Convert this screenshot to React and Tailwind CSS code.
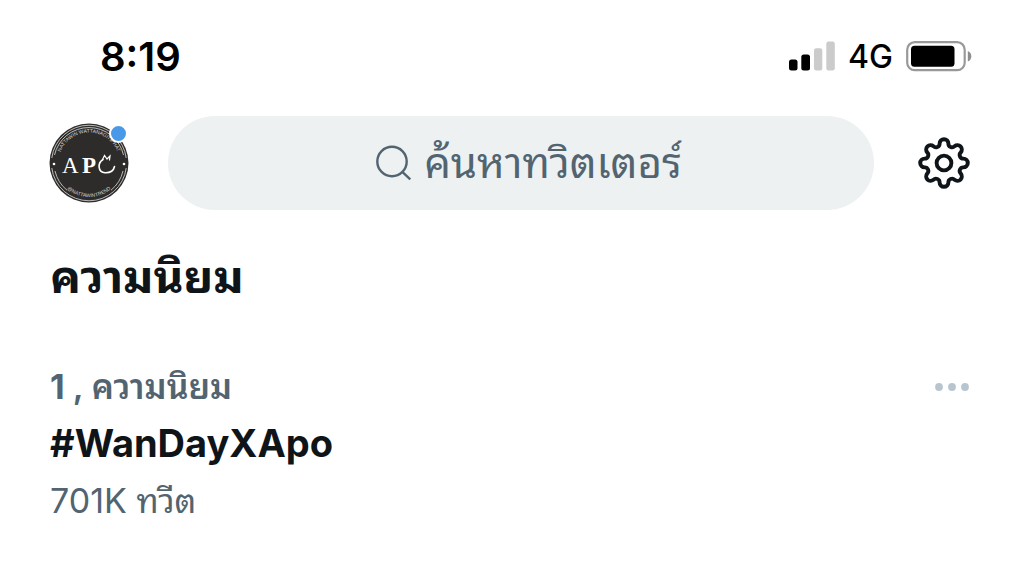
import React from 'react';

function SignalIcon() {
  return (
    <svg viewBox="0 0 46 32" className="h-8 w-[46px]" aria-hidden="true">
      <rect x="0" y="18.5" width="8.5" height="11" rx="2.5" fill="#000" />
      <rect x="12.3" y="13.5" width="8.7" height="16" rx="2.5" fill="#000" />
      <rect x="25" y="7.2" width="8.3" height="22.3" rx="2.2" fill="#cbcbcb" />
      <rect x="37.3" y="0.5" width="8.5" height="29" rx="2.2" fill="#cbcbcb" />
    </svg>
  );
}

function BatteryIcon() {
  return (
    <svg viewBox="0 0 66 32" className="h-8 w-[66px]" aria-hidden="true">
      <rect x="1.2" y="1.2" width="57.5" height="28" rx="7.5" fill="none" stroke="#999" strokeWidth="2.2" />
      <rect x="5" y="4.8" width="43.5" height="20.9" rx="3.5" fill="#000" />
      <path d="M61.8 10 Q65.3 11.5 65.3 15.2 Q65.3 19 61.8 20.5z" fill="#8e8e8e" />
    </svg>
  );
}

function SearchIcon() {
  return (
    <svg viewBox="0 0 36 36" className="size-9 shrink-0" fill="none" stroke="#536471" strokeWidth="2.4" aria-hidden="true">
      <circle cx="16" cy="16.5" r="14.7" />
      <path d="M26.3 26.8 L34.3 34.3" />
    </svg>
  );
}

function GearIcon() {
  return (
    <svg viewBox="-32 -32 64 64" className="size-16" fill="none" stroke="#0f1419" strokeWidth="3.9" aria-hidden="true">
      <circle r="7.4" />
      <path
        strokeLinejoin="round"
        d="M-4.4 -19.4A4.4 4.4 0 0 1 4.4 -19.4A3.6 3.6 0 0 0 10.6 -16.8A4.4 4.4 0 0 1 16.8 -10.6A3.6 3.6 0 0 0 19.4 -4.4A4.4 4.4 0 0 1 19.4 4.4A3.6 3.6 0 0 0 16.8 10.6A4.4 4.4 0 0 1 10.6 16.8A3.6 3.6 0 0 0 4.4 19.4A4.4 4.4 0 0 1 -4.4 19.4A3.6 3.6 0 0 0 -10.6 16.8A4.4 4.4 0 0 1 -16.8 10.6A3.6 3.6 0 0 0 -19.4 4.4A4.4 4.4 0 0 1 -19.4 -4.4A3.6 3.6 0 0 0 -16.8 -10.6A4.4 4.4 0 0 1 -10.6 -16.8A3.6 3.6 0 0 0 -4.4 -19.4z"
      />
    </svg>
  );
}

function MoreIcon() {
  return (
    <svg viewBox="0 0 36 10" className="h-[10px] w-9" fill="#b9c5ce" aria-hidden="true">
      <circle cx="5" cy="5" r="3.9" />
      <circle cx="18" cy="5" r="3.9" />
      <circle cx="31" cy="5" r="3.9" />
    </svg>
  );
}

function Avatar() {
  return (
    <button type="button" aria-label="APO" className="relative size-[82px] shrink-0 rounded-full">
      <svg viewBox="-41 -41 82 82" className="size-full">
        <circle r="39.5" fill="#2d2c2b" />
        <g fill="none" stroke="#c9c8c6" strokeWidth="0.9">
          <path d="M-37.2 -5 A37.5 37.5 0 0 1 37.2 -5" />
          <path d="M-37.2 5 A37.5 37.5 0 0 0 37.2 5" />
          <path d="M-34.5 -8 A35.4 35.4 0 0 1 34.5 -8" />
          <path d="M-34 8 A35 35 0 0 0 -22 27.2" />
          <path d="M34 8 A35 35 0 0 1 22 27.2" />
        </g>
        <circle cx="-35" cy="1" r="1.3" fill="#fff" />
        <circle cx="35" cy="1" r="1.3" fill="#fff" />
        <path id="arc-top" d="M-30.5 0 A30.5 30.5 0 0 1 30.5 0" fill="none" />
        <path id="arc-bottom" d="M-34 0 A34 34 0 0 0 34 0" fill="none" />
        <g fill="#d6d5d3" fontFamily="Liberation Sans, sans-serif" fontSize="5" textAnchor="middle">
          <text>
            <textPath href="#arc-top" startOffset="50%">NATTAWIN WATTANAGITIPHAT</textPath>
          </text>
          <text>
            <textPath href="#arc-bottom" startOffset="50%">@NATTAWINTREND</textPath>
          </text>
        </g>
        <g fill="#fff" fontFamily="Liberation Serif, serif" fontSize="23">
          <text x="-27" y="10">A</text>
          <text x="-7" y="10" fontWeight="bold">P</text>
        </g>
        <g fill="none" stroke="#fff" strokeLinecap="round">
          <path d="M14 -3.5 C8.5 0 8.5 9 16 9.8 C21 10 24.5 8 25.5 3.5" strokeWidth="1.6" />
          <path d="M13.5 -3.5 L15.5 -7.5 L18 -4 L21 -7 L20.5 -3" strokeWidth="1.2" />
        </g>
      </svg>
      <span className="absolute top-0.5 right-0.5 size-[19px] rounded-full border-2 border-white bg-[#4a99e9]" />
    </button>
  );
}

function StatusBar() {
  return (
    <div className="flex h-[116px] items-center justify-between pr-[52px] pb-0.5 pl-[100px] text-black">
      <time className="text-[40px] leading-none font-semibold">8:19</time>
      <div className="flex items-center gap-[13px]">
        <SignalIcon />
        <span className="text-[32px] leading-none font-medium">4G</span>
        <BatteryIcon />
      </div>
    </div>
  );
}

function Header() {
  return (
    <header className="flex items-center gap-[38px] px-12">
      <Avatar />
      <label className="flex h-[94px] min-w-0 flex-1 items-center justify-center gap-3 rounded-full bg-[#edf1f2] pl-4">
        <SearchIcon />
        <input
          type="text"
          aria-label="ค้นหาทวิตเตอร์"
          placeholder="ค้นหาทวิตเตอร์"
          className="field-sizing-content h-20 bg-transparent pb-2 text-[42px] text-[#536471] outline-none placeholder:text-[#536471] placeholder:opacity-100"
        />
      </label>
      <button type="button" aria-label="ตั้งค่า" className="shrink-0">
        <GearIcon />
      </button>
    </header>
  );
}

function Trend({ rank, category, name, count }) {
  return (
    <article className="flex items-start justify-between text-[#536471]">
      <div>
        <p className="text-[34px] leading-[56px] font-bold">
          {rank} <span className="font-semibold">, {category}</span>
        </p>
        <a href="#WanDayXApo" className="block text-[38px] leading-[56px] font-bold text-[#0f1419]">
          {name}
        </a>
        <p className="text-[34px] leading-[60px]">{count}</p>
      </div>
      <button type="button" aria-label="เพิ่มเติม" className="mr-1 flex h-14 items-center">
        <MoreIcon />
      </button>
    </article>
  );
}

export default function App() {
  return (
    <div className="min-h-screen bg-white font-['Inter','Noto_Sans_Thai_Looped','Loma','Garuda','Umpush','Waree',sans-serif]">
      <StatusBar />
      <Header />
      <main className="px-[50px] pt-[30px]">
        <h1 className="text-[46px] leading-[72px] font-bold text-[#0f1419]">ความนิยม</h1>
        <section className="pt-[47px]">
          <Trend rank="1" category="ความนิยม" name="#WanDayXApo" count="701K ทวีต" />
        </section>
      </main>
    </div>
  );
}
